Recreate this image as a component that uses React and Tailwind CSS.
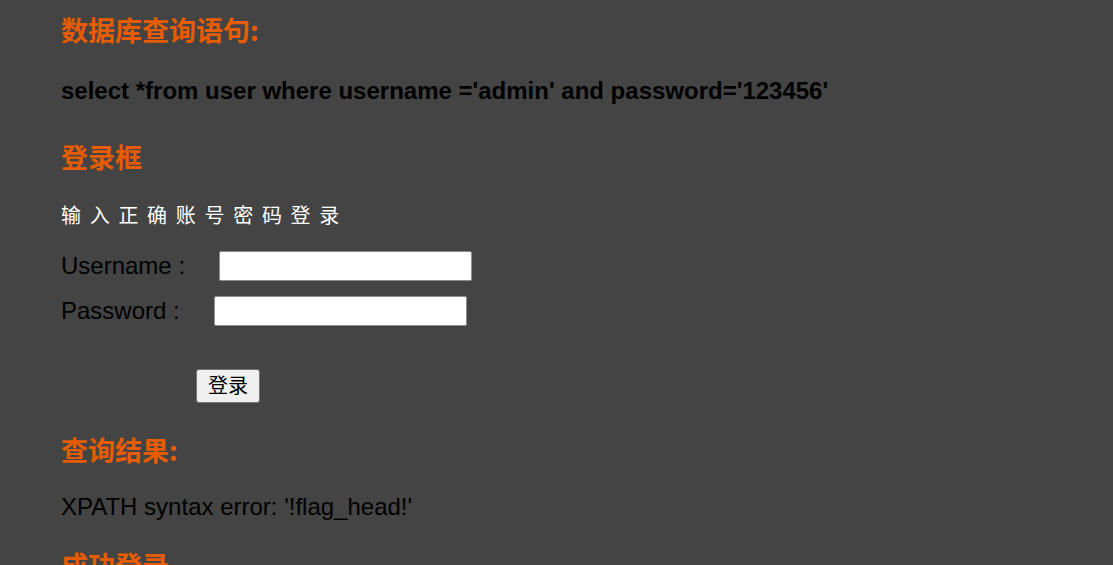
export default function App() {
  const cjk = { fontFamily: '"Liberation Sans", "Noto Sans CJK SC", sans-serif' };
  const heading =
    "flex items-center text-[27px] font-bold text-[#e65c00] font-['Noto_Sans_CJK_SC',sans-serif]";
  return (
    <div className="min-h-[565px] w-full bg-[#444444] pl-[61px] text-black font-['Liberation_Sans','Noto_Sans_CJK_SC',sans-serif] overflow-hidden h-[565px]">
      <div className={`${heading} h-[60px]`}>数据库查询语句:</div>
      <div className="flex h-[62px] items-center text-[24px] font-bold">
        select *from user where username ='admin' and password='123456'
      </div>
      <div className={`${heading} h-[70px]`}>登录框</div>
      <div className="flex h-[46px] items-center text-[20px] tracking-[8.7px] text-white font-['Noto_Sans_CJK_SC',sans-serif]">
        输入正确账号密码登录
      </div>
      <div className="mt-[11px] flex h-[34px] items-center text-[24px]">
        <span className="w-[158px]">Username :</span>
        <input
          type="text"
          className="h-[30px] w-[253px] rounded-[2px] border border-[#8f8f8f] bg-white"
        />
      </div>
      <div className="mt-[11px] flex h-[34px] items-center text-[24px]">
        <span className="w-[153px]">Password :</span>
        <input
          type="password"
          className="h-[30px] w-[253px] rounded-[2px] border border-[#8f8f8f] bg-white"
        />
      </div>
      <div className="mt-[41px] pl-[135px]">
        <button
          style={cjk}
          className="flex h-[34px] w-[64px] items-center justify-center rounded-[3px] border border-[#767676] bg-[#efefef] text-[20px] text-black"
        >
          登录
        </button>
      </div>
      <div className={`${heading} mt-[17px] h-[60px]`}>查询结果:</div>
      <div className="flex h-[54px] items-center text-[24px]">
        XPATH syntax error: '!flag_head!'
      </div>
      <div className={`${heading} h-[62px]`}>成功登录</div>
    </div>
  );
}
